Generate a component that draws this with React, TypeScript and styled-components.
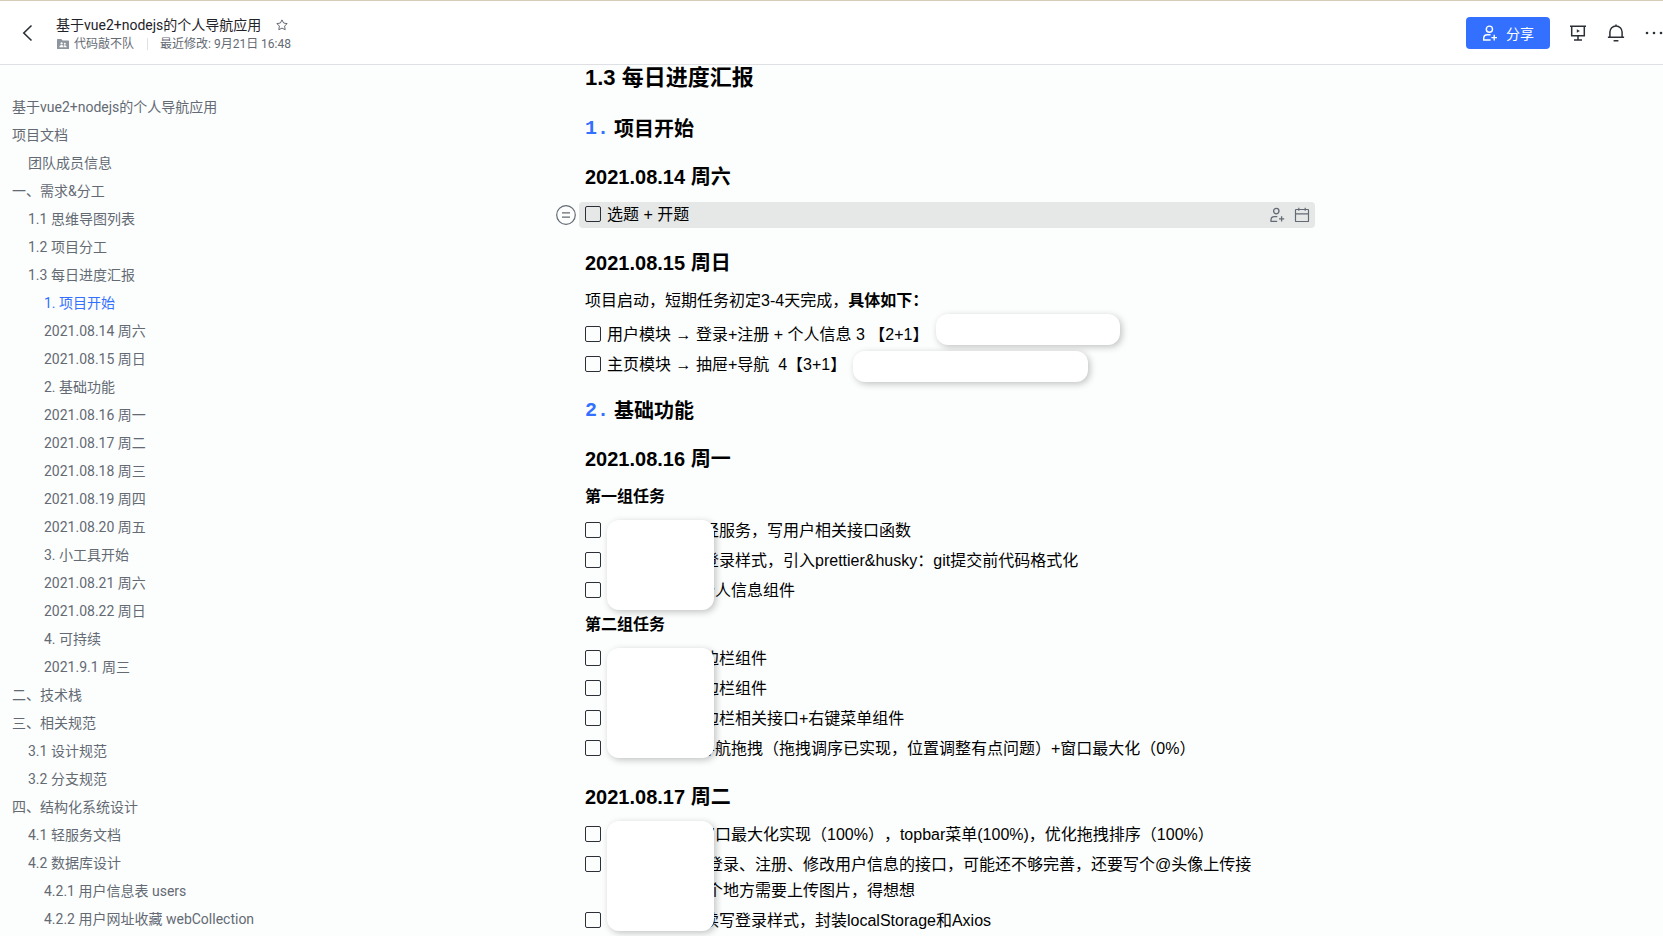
import React, { useState } from "react";
import styled, { createGlobalStyle, css } from "styled-components";

const GlobalStyle = createGlobalStyle`
  * { box-sizing: border-box; }
  body {
    margin: 0;
    background: #fcfefe;
    color: #000;
    font-family: "Liberation Sans", "Noto Sans CJK SC", sans-serif;
    text-spacing-trim: space-all;
    overflow: hidden;
  }
  button { border: 0; padding: 0; background: none; font: inherit; color: inherit; cursor: pointer; }
  svg { display: block; }
`;

const uiFont = `Roboto, "Noto Sans CJK SC", sans-serif`;

const Page = styled.div`
  display: flex;
  flex-direction: column;
  height: 100vh;
`;

const TopBar = styled.header`
  display: flex;
  flex: none;
  align-items: center;
  height: 65px;
  padding-left: 18px;
  background: #fff;
  border-top: 1px solid #d6cbb8;
  border-bottom: 1px solid #dee0e3;
  font-family: ${uiFont};
`;

const IconButton = styled.button<{ $muted?: boolean }>`
  display: flex;
  flex: none;
  align-items: center;
  justify-content: center;
  color: ${(p) => (p.$muted ? "#646a73" : "#2b2f36")};
`;

const DocInfo = styled.div`
  flex: 1;
  margin-left: 18px;
  padding-top: 3px;
`;

const TitleLine = styled.div`
  display: flex;
  align-items: center;
  gap: 15px;
`;

const DocTitle = styled.h1`
  margin: 0;
  font-size: 14px;
  line-height: 20px;
  font-weight: 400;
  color: #1f2329;
`;

const MetaLine = styled.div`
  display: flex;
  align-items: center;
  font-size: 12px;
  line-height: 18px;
  color: #646a73;
`;

const FolderLink = styled.a`
  display: flex;
  align-items: center;
  gap: 4px;
  padding-right: 13px;
  color: inherit;
  text-decoration: none;
`;

const Divider = styled.span`
  width: 1px;
  height: 12px;
  margin-right: 12px;
  background: #dee0e3;
`;

const Actions = styled.div`
  display: flex;
  align-items: center;
  gap: 20px;
`;

const ShareButton = styled.button`
  display: flex;
  align-items: center;
  justify-content: center;
  gap: 8px;
  width: 84px;
  height: 32px;
  border-radius: 4px;
  background: #3370ff;
  color: #fff;
  font-size: 14px;
`;

const Body = styled.div`
  display: flex;
  flex: 1;
  min-height: 0;
`;

const Outline = styled.nav`
  flex: none;
  width: 271px;
  padding: 28px 0 0 12px;
  overflow: hidden;
  font-family: ${uiFont};
`;

const OutlineList = styled.ul`
  margin: 0;
  padding: 0;
  list-style: none;
`;

const OutlineLink = styled.a<{ $level: number; $active: boolean }>`
  display: block;
  padding-left: ${(p) => p.$level * 16}px;
  font-size: 14px;
  line-height: 28px;
  white-space: nowrap;
  text-decoration: none;
  color: ${(p) => (p.$active ? "#3370ff" : "#646a73")};
`;

const Main = styled.main`
  flex: 1;
  min-width: 0;
  padding-right: 40px;
  overflow: hidden;
`;

const Article = styled.article`
  max-width: 736px;
  margin: 0 auto;
  font-size: 16px;
  line-height: 26px;
`;

const Section = styled.h2`
  margin: 0 6px 25px;
  font-size: 22px;
  line-height: 26px;
`;

const Numbered = styled.h3`
  display: flex;
  gap: 5px;
  margin: 20px 6px;
  font-size: 20px;
  line-height: 26px;
`;

const Num = styled.span`
  color: #3370ff;
  font-family: "Liberation Mono", monospace;
`;

const DateHeading = styled.h3`
  margin: 20px 6px 10px;
  font-size: 20px;
  line-height: 30px;
`;

const Para = styled.p`
  margin: 8px 6px;
`;

const Tasks = styled.ul`
  position: relative;
  margin: 0;
  padding: 0;
  list-style: none;
`;

const TaskRow = styled.li<{ $hover?: boolean }>`
  position: relative;
  display: flex;
  align-items: flex-start;
  margin: 4px 0;
  padding: 0 5px 0 6px;
  ${(p) =>
    p.$hover &&
    css`
      border-radius: 4px;
      background: #e6e8e8;
    `}
`;

const TaskLabel = styled.label<{ $indent: number }>`
  flex: 1;
  padding-left: ${(p) => p.$indent}px;
  white-space: pre-wrap;
`;

const Box = styled.input`
  appearance: none;
  flex: none;
  width: 16px;
  height: 16px;
  margin: 4px 6px 0 0;
  border: 1px solid #2b2f36;
  border-radius: 2px;
  background: transparent;
  &:checked { background: #3370ff; }
`;

const RowTools = styled.div`
  display: flex;
  gap: 9px;
  height: 26px;
`;

const Handle = styled.button`
  position: absolute;
  left: -23px;
  top: 3px;
  color: #646a73;
`;

const Cover = styled.div<{ $x: number; $y: number; $w: number; $h: number }>`
  position: absolute;
  left: ${(p) => p.$x}px;
  top: ${(p) => p.$y}px;
  width: ${(p) => p.$w}px;
  height: ${(p) => p.$h}px;
  border-radius: 12px;
  background: #fff;
  box-shadow: 2px 2px 7px rgba(0, 0, 0, 0.24);
`;

const MemberAddIcon = () => (
  <svg width="16" height="16" viewBox="0 0 16 16" fill="none" stroke="currentColor" strokeWidth="1.4">
    <circle cx="7.4" cy="4.2" r="3.1" />
    <path d="M8.6 15H1.7v-1.6c0-2.2 1.5-3.6 3.6-3.6h3.2M12.2 9.8v5.6M9.4 12.6H15" />
  </svg>
);

const MemberAddThinIcon = () => (
  <svg width="16" height="16" viewBox="0 0 16 16" fill="none" stroke="currentColor" strokeWidth="1.3">
    <circle cx="7.3" cy="4.1" r="2.7" />
    <path d="M8.2 14.3H2v-1.3c0-2.1 1.4-3.3 3.3-3.3h3M12.6 9.2v5.2M10 11.8h5.2" />
  </svg>
);

const BackIcon = () => (
  <svg width="20" height="20" viewBox="0 0 20 20" fill="none" stroke="currentColor" strokeWidth="1.6">
    <path d="M13.5 2.5 5.8 10l7.7 7.5" />
  </svg>
);

const StarIcon = () => (
  <svg width="12" height="12" viewBox="0 0 12 12" fill="none" stroke="#646a73" strokeLinejoin="round">
    <path d="M6 .9 7.6 4l3.5.6-2.5 2.5.6 3.6L6 9.1l-3.2 1.6.6-3.6L.9 4.6 4.4 4Z" />
  </svg>
);

const FolderIcon = () => (
  <svg width="14" height="12" viewBox="0 0 14 12">
    <path d="M1 1.6C1 1.2 1.3 1 1.6 1h3.6l1.4 1.4h5.8c.4 0 .6.3.6.6v7.4c0 .4-.2.6-.6.6H1.6c-.3 0-.6-.2-.6-.6Z" fill="#8f959e" />
    <circle cx="5.6" cy="5.4" r="1.1" fill="#fff" />
    <circle cx="8.8" cy="5.8" r="1" fill="#fff" />
    <path d="M3.4 9.2c0-2.8 4.2-2.8 4.2 0ZM8.2 9.2c0-.8-.2-1.3-.5-1.7 1.2-.7 3 0 3 1.7Z" fill="#fff" />
  </svg>
);

const PresentIcon = () => (
  <svg width="17" height="16" viewBox="0 0 17 16" fill="none" stroke="currentColor" strokeWidth="1.5">
    <path d="M0 1.2h16M1.7 1.2v9.6h12.6V1.2M8 10.8V15M4 15h8" />
    <path d="M6.8 4.2v3.6L9.9 6Z" fill="currentColor" stroke="none" />
  </svg>
);

const BellIcon = () => (
  <svg width="18" height="18" viewBox="0 0 18 18" fill="none" stroke="currentColor" strokeWidth="1.5">
    <path d="M.9 13.3h16.2M2.9 13.3V8a6.1 6.1 0 0 1 12.2 0v5.3M6.6 16.7h4.8M9 .4v1.8" />
  </svg>
);

const MoreIcon = () => (
  <svg width="18" height="4" viewBox="0 0 18 4" fill="currentColor">
    <circle cx="2" cy="2" r="1.3" />
    <circle cx="9" cy="2" r="1.3" />
    <circle cx="16" cy="2" r="1.3" />
  </svg>
);

const CalendarIcon = () => (
  <svg width="16" height="16" viewBox="0 0 16 16" fill="none" stroke="currentColor" strokeWidth="1.2">
    <rect x="1.5" y="2.5" width="13" height="12" rx=".6" />
    <path d="M1.5 6.8h13M4.8.8v3M11.2.8v3" />
  </svg>
);

const HandleIcon = () => (
  <svg width="20" height="20" viewBox="0 0 20 20" fill="none" stroke="currentColor" strokeWidth="1.2">
    <circle cx="10" cy="10" r="9.3" />
    <path d="M6 7.8h8M6 12.2h8" />
  </svg>
);

const outline: [number, string][] = [
  [0, "基于vue2+nodejs的个人导航应用"],
  [0, "项目文档"],
  [1, "团队成员信息"],
  [0, "一、需求&分工"],
  [1, "1.1 思维导图列表"],
  [1, "1.2 项目分工"],
  [1, "1.3 每日进度汇报"],
  [2, "1. 项目开始"],
  [2, "2021.08.14 周六"],
  [2, "2021.08.15 周日"],
  [2, "2. 基础功能"],
  [2, "2021.08.16 周一"],
  [2, "2021.08.17 周二"],
  [2, "2021.08.18 周三"],
  [2, "2021.08.19 周四"],
  [2, "2021.08.20 周五"],
  [2, "3. 小工具开始"],
  [2, "2021.08.21 周六"],
  [2, "2021.08.22 周日"],
  [2, "4. 可持续"],
  [2, "2021.9.1 周三"],
  [0, "二、技术栈"],
  [0, "三、相关规范"],
  [1, "3.1 设计规范"],
  [1, "3.2 分支规范"],
  [0, "四、结构化系统设计"],
  [1, "4.1 轻服务文档"],
  [1, "4.2 数据库设计"],
  [2, "4.2.1 用户信息表 users"],
  [2, "4.2.2 用户网址收藏 webCollection"],
];

interface TaskProps {
  id: string;
  text: string;
  indent?: number;
  hover?: boolean;
  children?: React.ReactNode;
}

const Task = ({ id, text, indent = 0, hover, children }: TaskProps) => (
  <TaskRow $hover={hover}>
    <Box type="checkbox" id={id} />
    <TaskLabel htmlFor={id} $indent={indent}>{text}</TaskLabel>
    {children}
  </TaskRow>
);

export default function App() {
  const [active, setActive] = useState(7);
  return (
    <Page lang="zh-CN">
      <GlobalStyle />
      <TopBar>
        <IconButton aria-label="返回"><BackIcon /></IconButton>
        <DocInfo>
          <TitleLine>
            <DocTitle>基于vue2+nodejs的个人导航应用</DocTitle>
            <IconButton aria-label="收藏"><StarIcon /></IconButton>
          </TitleLine>
          <MetaLine>
            <FolderLink href="#folder"><FolderIcon />代码敲不队</FolderLink>
            <Divider />
            <span>最近修改: 9月21日 16:48</span>
          </MetaLine>
        </DocInfo>
        <Actions>
          <ShareButton><MemberAddIcon />分享</ShareButton>
          <IconButton aria-label="演示"><PresentIcon /></IconButton>
          <IconButton aria-label="通知"><BellIcon /></IconButton>
          <IconButton aria-label="更多"><MoreIcon /></IconButton>
        </Actions>
      </TopBar>
      <Body>
        <Outline aria-label="目录">
          <OutlineList>
            {outline.map(([level, text], i) => (
              <li key={i}>
                <OutlineLink href={`#h${i}`} $level={level} $active={i === active} onClick={() => setActive(i)}>
                  {text}
                </OutlineLink>
              </li>
            ))}
          </OutlineList>
        </Outline>
        <Main>
          <Article>
            <Section>1.3 每日进度汇报</Section>
            <Numbered><Num>1.</Num>项目开始</Numbered>
            <DateHeading>2021.08.14 周六</DateHeading>
            <Tasks>
              <Task id="t1" text="选题 + 开题" hover>
                <RowTools>
                  <IconButton $muted aria-label="指派"><MemberAddThinIcon /></IconButton>
                  <IconButton $muted aria-label="日期"><CalendarIcon /></IconButton>
                </RowTools>
                <Handle aria-label="块菜单"><HandleIcon /></Handle>
              </Task>
            </Tasks>
            <DateHeading>2021.08.15 周日</DateHeading>
            <Para>项目启动，短期任务初定3-4天完成，<strong>具体如下：</strong></Para>
            <Tasks>
              <Task id="t2" text="用户模块 → 登录+注册 + 个人信息 3 【2+1】" />
              <Task id="t3" text="主页模块 → 抽屉+导航  4【3+1】" />
              <Cover $x={357} $y={-8} $w={184} $h={31} />
              <Cover $x={274} $y={29} $w={235} $h={31} />
            </Tasks>
            <Numbered><Num>2.</Num>基础功能</Numbered>
            <DateHeading>2021.08.16 周一</DateHeading>
            <Para><strong>第一组任务</strong></Para>
            <Tasks>
              <Task id="t4" indent={96} text="轻服务，写用户相关接口函数" />
              <Task id="t5" indent={96} text="登录样式，引入prettier&husky：git提交前代码格式化" />
              <Task id="t6" indent={92} text="个人信息组件" />
              <Cover $x={28} $y={2} $w={107} $h={90} />
            </Tasks>
            <Para><strong>第二组任务</strong></Para>
            <Tasks>
              <Task id="t7" indent={96} text="边栏组件" />
              <Task id="t8" indent={96} text="边栏组件" />
              <Task id="t9" indent={96} text="边栏相关接口+右键菜单组件" />
              <Task id="t10" indent={92} text="导航拖拽（拖拽调序已实现，位置调整有点问题）+窗口最大化（0%）" />
              <Cover $x={28} $y={2} $w={107} $h={110} />
            </Tasks>
            <DateHeading>2021.08.17 周二</DateHeading>
            <Tasks>
              <Task id="t11" indent={92} text="窗口最大化实现（100%），topbar菜单(100%)，优化拖拽排序（100%）" />
              <Task id="t12" indent={100} text={"登录、注册、修改用户信息的接口，可能还不够完善，还要写个@头像上传接\n个地方需要上传图片，得想想"} />
              <Task id="t13" indent={96} text="续写登录样式，封装localStorage和Axios" />
              <Cover $x={28} $y={-1} $w={107} $h={110} />
            </Tasks>
          </Article>
        </Main>
      </Body>
    </Page>
  );
}
